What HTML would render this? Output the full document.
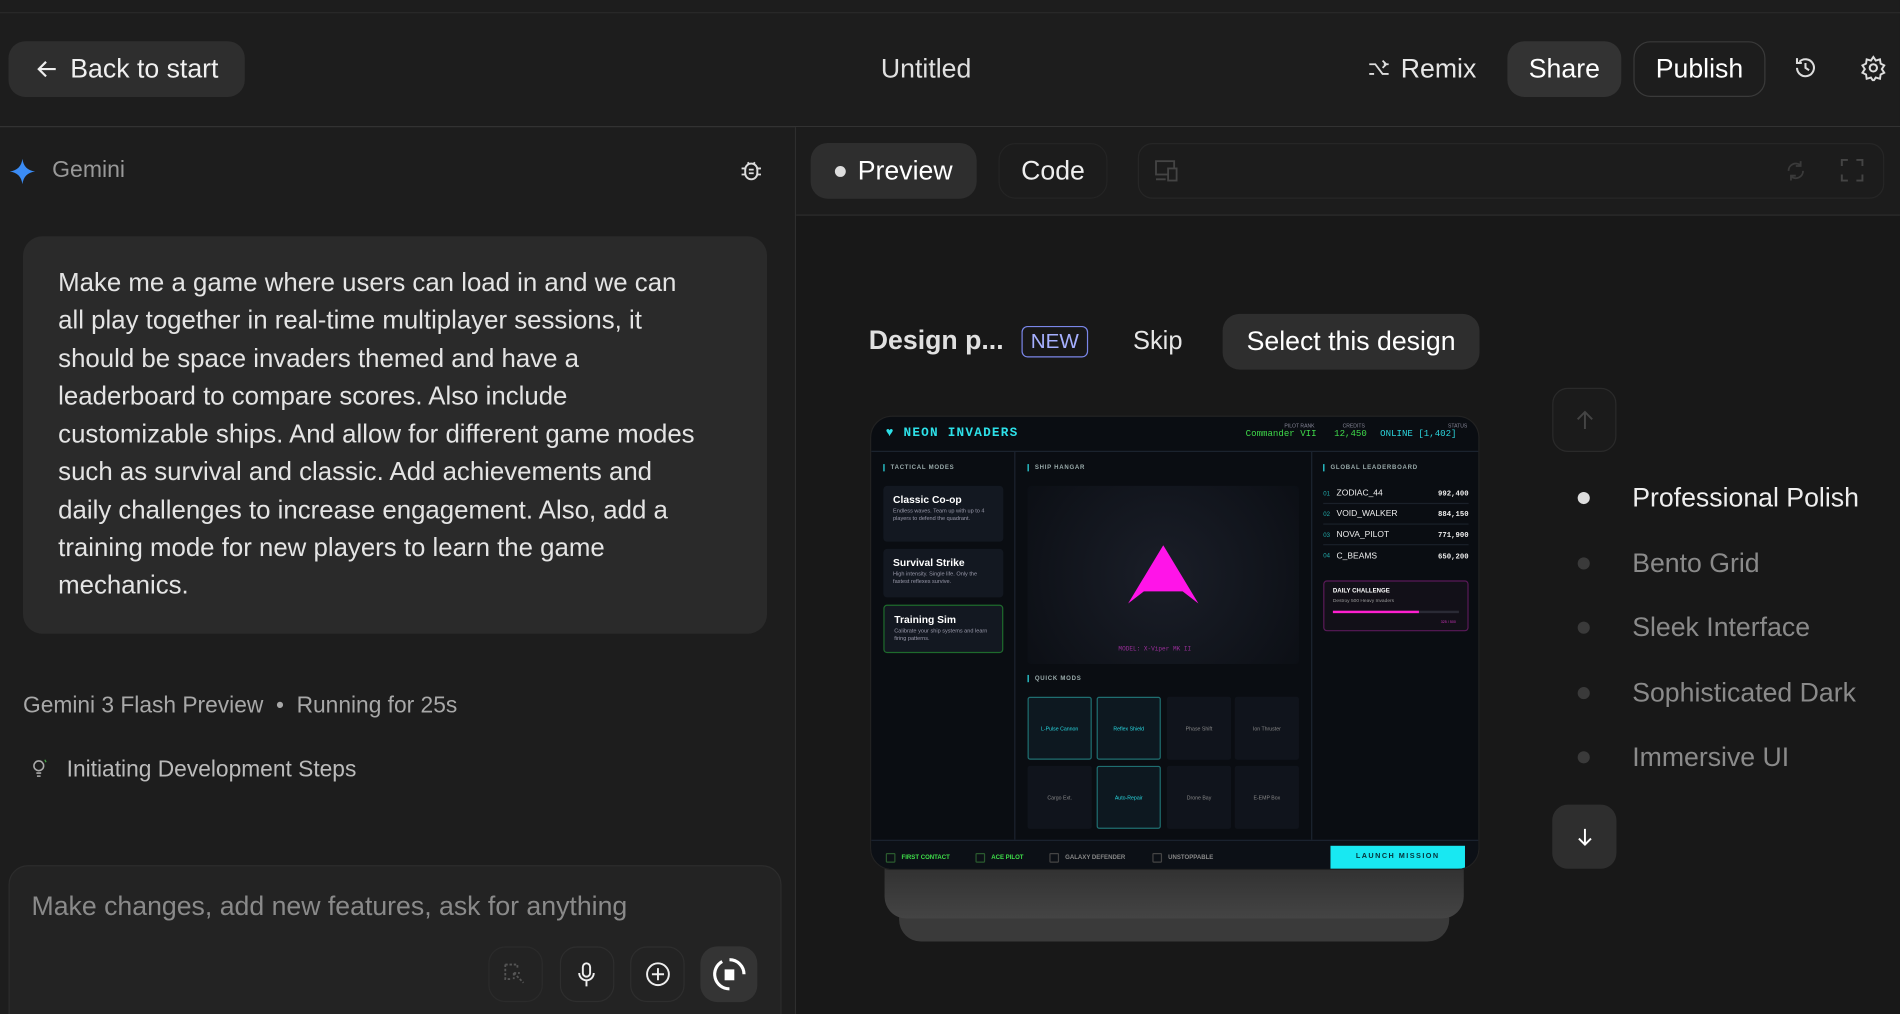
<!DOCTYPE html>
<html><head><meta charset="utf-8"><style>
*{box-sizing:border-box;margin:0;padding:0}
html,body{width:1900px;height:1014px;overflow:hidden;background:#1d1d1d}
body{font-family:"Liberation Sans",sans-serif;color:#e6e6e6}
#w{position:absolute;left:0;top:0;width:1568px;height:837px;transform:scale(1.21173);transform-origin:0 0;background:#1d1d1d;overflow:hidden}
.a{position:absolute}
.btn{position:absolute;border-radius:14px;display:flex;align-items:center;justify-content:center}
.mono{font-family:"Liberation Mono",monospace}
.g{position:absolute;font-size:5px;color:#9aa;letter-spacing:.6px;font-weight:bold}
.tile{position:absolute;width:53px;height:52px;background:#10141c;border-radius:2px;font-size:4.3px;color:#888;display:flex;align-items:center;justify-content:center}
.tile.on{border:1px solid #1f6e70;color:#28d8e0;background:#0d1820}
.mode{position:absolute;left:10px;width:99px;background:#131821;border-radius:3px;padding:6px 8px}
.mode b{display:block;font-size:8.5px;color:#fff}
.mode span{display:block;font-size:4.6px;color:#99a;line-height:5.5px;margin-top:2px}
.lb{position:absolute;left:10px;width:120px;height:16px;border-bottom:1px solid #1a2029;font-size:7px;color:#eee;display:flex;align-items:center}
.lb i{font-style:normal;color:#2aa;width:11px;font-size:5px}
.lb em{font-style:normal;margin-left:auto;font-family:"Liberation Mono",monospace;font-size:6px;font-weight:bold}
.ach{position:absolute;top:10px;font-size:5px;font-weight:bold;display:flex;align-items:center}
.ach s{text-decoration:none;width:8px;height:8px;border:1px solid #444;margin-right:5px;border-radius:1px}
.li{position:absolute;left:1347px;font-size:22px;color:#8a8a8a}
.dot{position:absolute;left:1302px;width:10px;height:10px;border-radius:50%;background:#3a3a3a}
</style></head><body><div id="w">
<div class="a" style="left:0;top:10px;width:1568px;height:1px;background:#2a2a2a"></div>
<div class="btn" style="left:7px;top:34px;width:195px;height:46px;background:#2e2e2e;font-size:22px;color:#f0f0f0;justify-content:flex-start;padding-left:22px">
<svg width="20" height="20" viewBox="0 0 20 20" style="margin-right:9px"><path d="M17 10H4M9 4l-6 6 6 6" stroke="#eee" stroke-width="1.8" fill="none"/></svg>Back to start</div>
<div class="a" style="left:727px;top:44px;font-size:22px;color:#e0e0e0">Untitled</div>
<div class="a" style="left:1128px;top:44px;font-size:22px;color:#e6e6e6;display:flex;align-items:center">
<svg width="20" height="20" viewBox="0 0 20 20" style="margin-right:8px"><path d="M2 6h5l6 8h5M13 3l3 3-3 3M18 6h-4M2 14h4" stroke="#ddd" stroke-width="1.5" fill="none"/></svg>Remix</div>
<div class="btn" style="left:1244px;top:34px;width:94px;height:46px;background:#333;font-size:22px;color:#fff">Share</div>
<div class="btn" style="left:1348px;top:34px;width:109px;height:46px;border:1px solid #3a3a3a;font-size:22px;color:#fff">Publish</div>
<svg class="a" style="left:1479px;top:45px" width="22" height="22" viewBox="0 0 22 22"><path d="M4 11a7 7 0 1 0 2-5M4 3v4h4M11 7v4l3 2" stroke="#ddd" stroke-width="1.7" fill="none"/></svg>
<svg class="a" style="left:1535px;top:45px" width="22" height="22" viewBox="0 0 22 22"><circle cx="11" cy="11" r="3" stroke="#ddd" stroke-width="1.7" fill="none"/><path d="M11 2l2 3 3.5-1 .5 3.5 3 1.5-2 3 2 3-3 1.5-.5 3.5-3.5-1-2 3-2-3-3.5 1-.5-3.5-3-1.5 2-3-2-3 3-1.5.5-3.5 3.5 1z" stroke="#ddd" stroke-width="1.6" fill="none"/></svg>
<div class="a" style="left:0;top:104px;width:1568px;height:1px;background:#333"></div>
<div class="a" style="left:656px;top:105px;width:1px;height:732px;background:#2e2e2e"></div>
<svg class="a" style="left:8px;top:131px" width="21" height="21" viewBox="0 0 20 20"><path d="M10 0C10.8 6 14 9.2 20 10 14 10.8 10.8 14 10 20 9.2 14 6 10.8 0 10 6 9.2 9.2 6 10 0z" fill="#3b8cf5"/></svg>
<div class="a" style="left:43px;top:130px;font-size:19px;color:#999">Gemini</div>
<svg class="a" style="left:610px;top:130px" width="20" height="22" viewBox="0 0 20 22"><rect x="5" y="5" width="10" height="13" rx="5" stroke="#ddd" stroke-width="1.6" fill="none"/><path d="M7 4l1.5 1.5M13 4l-1.5 1.5M2 9h3M15 9h3M2 14h3M15 14h3M8 10h4M8 13h4" stroke="#ddd" stroke-width="1.5"/></svg>
<div class="a" style="left:19px;top:195px;width:614px;height:328px;background:#2a2a2a;border-radius:16px"></div>
<div class="a" style="left:48px;top:218px;font-size:21.3px;line-height:31.3px;color:#e4e4e4;white-space:nowrap">Make me a game where users can load in and we can<br>all play together in real-time multiplayer sessions, it<br>should be space invaders themed and have a<br>leaderboard to compare scores. Also include<br>customizable ships. And allow for different game modes<br>such as survival and classic. Add achievements and<br>daily challenges to increase engagement. Also, add a<br>training mode for new players to learn the game<br>mechanics.</div>
<div class="a" style="left:19px;top:571px;font-size:18.8px;color:#a8a8a8">Gemini 3 Flash Preview &nbsp;•&nbsp; Running for 25s</div>
<svg class="a" style="left:26px;top:626px" width="16" height="18" viewBox="0 0 16 18"><circle cx="6" cy="6" r="4" stroke="#aaa" stroke-width="1.3" fill="none"/><path d="M4 12h4M4.5 14.5h3" stroke="#aaa" stroke-width="1.3"/><path d="M11 1l1 2" stroke="#4a4" stroke-width="1"/></svg>
<div class="a" style="left:55px;top:624px;font-size:18.8px;color:#bbb">Initiating Development Steps</div>
<div class="a" style="left:7px;top:714px;width:638px;height:140px;background:#232323;border:1px solid #2c2c2c;border-radius:16px"></div>
<div class="a" style="left:26px;top:735px;font-size:22px;color:#8a8a8a">Make changes, add new features, ask for anything</div>
<div class="a" style="left:403px;top:781px;width:45px;height:46px;border:1px solid #2b2b2b;border-radius:14px"></div>
<svg class="a" style="left:415px;top:794px" width="20" height="20" viewBox="0 0 20 20"><path d="M2 2h10v3M2 2v12h4M9 9l8 8M9 9h5M9 9v5" stroke="#555" stroke-width="1.5" fill="none" stroke-dasharray="2 1.5"/></svg>
<div class="a" style="left:462px;top:781px;width:45px;height:46px;border:1px solid #2e2e2e;border-radius:14px"></div>
<svg class="a" style="left:474px;top:793px" width="20" height="22" viewBox="0 0 20 22"><rect x="7" y="2" width="6" height="11" rx="3" stroke="#eee" stroke-width="1.6" fill="none"/><path d="M4 10a6 6 0 0 0 12 0M10 16v5" stroke="#eee" stroke-width="1.6" fill="none"/></svg>
<div class="a" style="left:520px;top:781px;width:45px;height:46px;border:1px solid #2e2e2e;border-radius:14px"></div>
<svg class="a" style="left:532px;top:793px" width="22" height="22" viewBox="0 0 22 22"><circle cx="11" cy="11" r="9" stroke="#eee" stroke-width="1.6" fill="none"/><path d="M11 6v10M6 11h10" stroke="#eee" stroke-width="1.6"/></svg>
<div class="a" style="left:578px;top:781px;width:47px;height:46px;background:#343434;border-radius:14px"></div>
<svg class="a" style="left:586px;top:788px" width="32" height="32" viewBox="0 0 32 32"><path d="M16 4a12 12 0 0 1 12 12M16 28A12 12 0 0 1 10 5.5" stroke="#fff" stroke-width="2.6" fill="none"/><rect x="12" y="12" width="8" height="9" fill="#fff"/></svg>
<div class="a" style="left:657px;top:105px;width:911px;height:732px;background:#181818"></div>
<div class="a" style="left:657px;top:105px;width:911px;height:73px;background:#1c1c1c;border-bottom:1px solid #2c2c2c"></div>
<div class="btn" style="left:669px;top:118px;width:137px;height:46px;background:#2e2e2e;font-size:22px;color:#fff"><span style="width:9px;height:9px;border-radius:50%;background:#ddd;margin-right:10px"></span>Preview</div>
<div class="btn" style="left:824px;top:118px;width:90px;height:46px;border:1px solid #242424;font-size:22px;color:#eee">Code</div>
<div class="a" style="left:939px;top:118px;width:616px;height:46px;border:1px solid #262626;border-radius:12px"></div>
<svg class="a" style="left:952px;top:131px" width="22" height="20" viewBox="0 0 22 20"><rect x="2" y="2" width="15" height="11" stroke="#444" stroke-width="1.5" fill="none"/><rect x="12" y="8" width="7" height="10" stroke="#444" stroke-width="1.5" fill="#1c1c1c"/><path d="M2 17h8" stroke="#444" stroke-width="1.5"/></svg>
<svg class="a" style="left:1472px;top:131px" width="20" height="20" viewBox="0 0 20 20"><path d="M4 10a6 6 0 0 1 10-4.5M16 10a6 6 0 0 1-10 4.5M14 2v4h-4M6 18v-4h4" stroke="#3a3a3a" stroke-width="1.5" fill="none"/></svg>
<svg class="a" style="left:1518px;top:130px" width="21" height="21" viewBox="0 0 21 21"><path d="M2 7V2h5M14 2h5v5M19 14v5h-5M7 19H2v-5" stroke="#444" stroke-width="1.6" fill="none"/></svg>
<div class="a" style="left:717px;top:268px;font-size:22px;font-weight:bold;color:#e0e0e0">Design p...</div>
<div class="a" style="left:843px;top:269px;width:55px;height:26px;border:1px solid #7a86e8;border-radius:5px;color:#a6b0ff;font-size:17px;text-align:center;line-height:24px">NEW</div>
<div class="a" style="left:935px;top:270px;font-size:21px;color:#e6e6e6">Skip</div>
<div class="btn" style="left:1009px;top:259px;width:212px;height:46px;background:#2e2e2e;font-size:22px;color:#fff">Select this design</div>
<div class="a" style="left:742px;top:700px;width:454px;height:77px;background:#3a3a3a;border-radius:18px"></div>
<div class="a" style="left:730px;top:700px;width:478px;height:58px;background:linear-gradient(#2a2a2a,#444);border-radius:18px"></div>
<div class="a" style="left:718px;top:343px;width:503px;height:375px;background:#0a0d12;border-radius:18px;overflow:hidden;border:1px solid #222">
 <div class="a" style="left:0;top:0;width:503px;height:29px;border-bottom:1px solid #1c2430"></div>
 <div class="a mono" style="left:12px;top:8px;font-size:10.5px;font-weight:bold;color:#2de0e8;letter-spacing:1px">♥ NEON INVADERS</div>
 <div class="a" style="left:341px;top:5px;font-size:4.2px;color:#889">PILOT RANK</div>
 <div class="a mono" style="left:309px;top:11px;font-size:7.5px;color:#3fd94a">Commander VII</div>
 <div class="a" style="left:389px;top:5px;font-size:4.2px;color:#889">CREDITS</div>
 <div class="a mono" style="left:382px;top:11px;font-size:7.5px;color:#3fd94a">12,450</div>
 <div class="a" style="left:476px;top:5px;font-size:4.2px;color:#889">STATUS</div>
 <div class="a mono" style="left:420px;top:11px;font-size:7.5px;color:#2bd3db">ONLINE [1,402]</div>
 <div class="a" style="left:118px;top:29px;width:1px;height:320px;background:#1c2430"></div>
 <div class="a" style="left:363px;top:29px;width:1px;height:320px;background:#1c2430"></div>
 <div class="g" style="left:10px;top:39px;border-left:1px solid #2de0e8;padding-left:5px">TACTICAL MODES</div>
 <div class="mode" style="top:57px;height:46px"><b>Classic Co-op</b><span>Endless waves. Team up with up to 4 players to defend the quadrant.</span></div>
 <div class="mode" style="top:109px;height:40px"><b>Survival Strike</b><span>High intensity. Single life. Only the fastest reflexes survive.</span></div>
 <div class="mode" style="top:155px;height:40px;border:1px solid #1e6a2c"><b>Training Sim</b><span>Calibrate your ship systems and learn firing patterns.</span></div>
 <div class="g" style="left:129px;top:39px;border-left:1px solid #2de0e8;padding-left:5px">SHIP HANGAR</div>
 <div class="a" style="left:129px;top:57px;width:224px;height:147px;background:radial-gradient(circle,#1a1e28,#0c0f15);border-radius:3px"></div>
 <svg class="a" style="left:211px;top:106px" width="60" height="50" viewBox="0 0 60 50"><path d="M30 0L59 48 46 38H14L1 48z" fill="#ff14e8"/></svg>
 <div class="a mono" style="left:204px;top:189px;font-size:5px;color:#9a2e9a">MODEL: X-Viper MK II</div>
 <div class="g" style="left:129px;top:213px;border-left:1px solid #2de0e8;padding-left:5px">QUICK MODS</div>
 <div class="tile on" style="left:129px;top:231px">L-Pulse Cannon</div>
 <div class="tile on" style="left:186px;top:231px">Reflex Shield</div>
 <div class="tile" style="left:244px;top:231px">Phase Shift</div>
 <div class="tile" style="left:300px;top:231px">Ion Thruster</div>
 <div class="tile" style="left:129px;top:288px">Cargo Ext.</div>
 <div class="tile on" style="left:186px;top:288px">Auto-Repair</div>
 <div class="tile" style="left:244px;top:288px">Drone Bay</div>
 <div class="tile" style="left:300px;top:288px">E-EMP Box</div>
 <div class="g" style="left:373px;top:39px;border-left:1px solid #2de0e8;padding-left:5px">GLOBAL LEADERBOARD</div>
 <div style="position:absolute;left:363px;top:0">
 <div class="lb" style="top:56px"><i>01</i>ZODIAC_44<em>992,400</em></div>
 <div class="lb" style="top:73px"><i>02</i>VOID_WALKER<em>884,150</em></div>
 <div class="lb" style="top:90px"><i>03</i>NOVA_PILOT<em>771,900</em></div>
 <div class="lb" style="top:107px;border:none"><i>04</i>C_BEAMS<em>650,200</em></div>
 </div>
 <div class="a" style="left:373px;top:135px;width:120px;height:42px;border:1px solid #5a1a58;border-radius:3px;background:#121018">
  <div class="a" style="left:7px;top:5px;font-size:5px;font-weight:bold;color:#fff">DAILY CHALLENGE</div>
  <div class="a" style="left:7px;top:13px;font-size:4px;color:#999">Destroy 500 Heavy Invaders</div>
  <div class="a" style="left:7px;top:24px;width:104px;height:2px;background:#2a2a35"><div style="width:68%;height:2px;background:#ff1fd0"></div></div>
  <div class="a" style="left:96px;top:31px;font-size:3px;color:#c3b">325 / 500</div>
 </div>
 <div class="a" style="left:0;top:349px;width:503px;height:26px;border-top:1px solid #1c2430;background:#0c1016">
  <div class="ach" style="left:12px;color:#3fe04a"><s style="border-color:#2a5a2e"></s>FIRST CONTACT</div>
  <div class="ach" style="left:86px;color:#3fe04a"><s style="border-color:#2a5a2e"></s>ACE PILOT</div>
  <div class="ach" style="left:147px;color:#888"><s></s>GALAXY DEFENDER</div>
  <div class="ach" style="left:232px;color:#888"><s></s>UNSTOPPABLE</div>
  <div class="a" style="left:379px;top:4px;width:111px;height:19px;background:#18e8f2;color:#06323a;font-size:6px;font-weight:bold;letter-spacing:1.2px;text-align:center;line-height:19px">LAUNCH MISSION</div>
 </div>
</div>
<div class="a" style="left:1281px;top:320px;width:53px;height:53px;border:1px solid #2a2a2a;border-radius:13px;background:#1b1b1b"></div>
<svg class="a" style="left:1298px;top:337px" width="20" height="20" viewBox="0 0 20 20"><path d="M10 17V3M4 9l6-6 6 6" stroke="#444" stroke-width="1.6" fill="none"/></svg>
<div class="a" style="left:1281px;top:664px;width:53px;height:53px;border-radius:13px;background:#2e2e2e"></div>
<svg class="a" style="left:1299px;top:682px" width="18" height="18" viewBox="0 0 18 18"><path d="M9 2v13M4 10l5 5 5-5" stroke="#fff" stroke-width="1.6" fill="none"/></svg>
<div class="dot" style="top:406px;background:#ddd"></div><div class="li" style="top:398px;color:#eee">Professional Polish</div>
<div class="dot" style="top:460px"></div><div class="li" style="top:452px">Bento Grid</div>
<div class="dot" style="top:513px"></div><div class="li" style="top:505px">Sleek Interface</div>
<div class="dot" style="top:567px"></div><div class="li" style="top:559px">Sophisticated Dark</div>
<div class="dot" style="top:620px"></div><div class="li" style="top:612px">Immersive UI</div>
</div></body></html>
